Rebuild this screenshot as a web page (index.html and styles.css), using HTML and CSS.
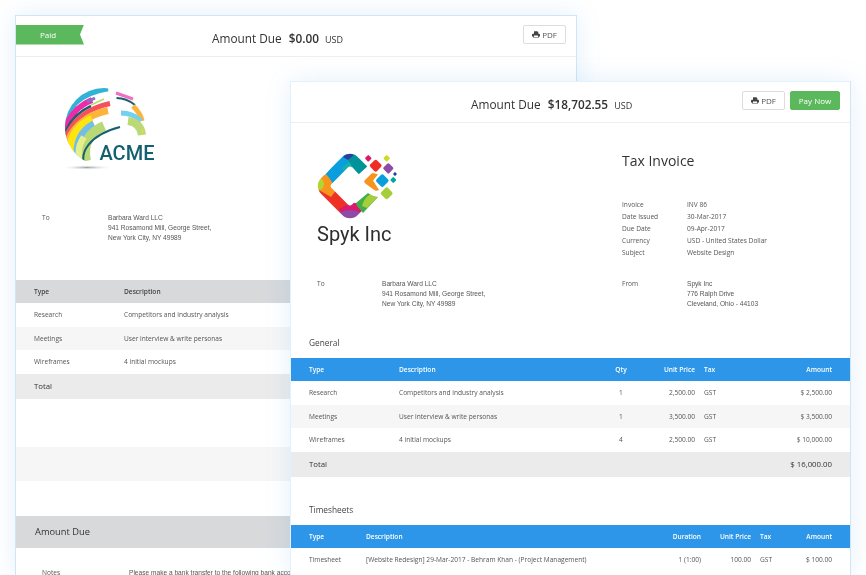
FILE: index.html
```html
<!DOCTYPE html>
<html lang="en">
<head>
    <meta charset="UTF-8">
    <meta name="viewport" content="width=device-width, initial-scale=1.0">
    <title>Invoices</title>
    <link rel="stylesheet" href="styles.css">
</head>
<body>
    <div class="invoice invoice-back">
        <div class="invoice-head">
            <div class="ribbon">Paid</div>
            <div class="due due-back">Amount Due <b>$0.00</b> <span>USD</span></div>
            <button class="btn btn-back"><svg class="printer" viewBox="0 0 12 10"><path d="M3 0h5l1.500 1.500V4H3z M1.500 4h9A1.500 1.500 0 0 1 12 5.500V8h-2v2H2V8H0V5.500A1.500 1.500 0 0 1 1.500 4z M3 6.500V9h6V6.500z" fill-rule="evenodd"/></svg> PDF</button>
        </div>
        <svg class="acme-logo" viewBox="0 0 120 100">
            <defs>
                <radialGradient id="acmeShadow">
                    <stop offset="0" stop-color="#9aa0a3"/>
                    <stop offset="1" stop-color="#fff" stop-opacity="0"/>
                </radialGradient>
                <clipPath id="globe">
                    <circle cx="54" cy="52" r="39"/>
                </clipPath>
            </defs>
            <ellipse cx="37" cy="92.500" rx="26" ry="2.500" fill="url(#acmeShadow)"/>
            <g fill="none" clip-path="url(#globe)">
                <path d="M12 58C14 30 32 17 58 13" stroke="#2fb4d8" stroke-width="6.500"/>
                <path d="M14 56C20 38 30 30 42 25" stroke="#ee2aa6" stroke-width="6"/>
                <path d="M37 27L45 23" stroke="#8d6cc8" stroke-width="3"/>
                <path d="M14 60C20 44 30 36 41 31" stroke="#16606f" stroke-width="2.500"/>
                <path d="M41 30L54 24" stroke="#b4dc6a" stroke-width="1.500"/>
                <path d="M14 68C20 46 38 33 60 28.500" stroke="#f5505c" stroke-width="5"/>
                <path d="M16 72C22 50 40 39 58 35.500" stroke="#fdb43c" stroke-width="7"/>
                <path d="M22 84C16 66 28 50 42 44" stroke="#fde60f" stroke-width="8"/>
                <path d="M28 86C24 68 32 55 44 49" stroke="#72bdea" stroke-width="7"/>
                <path d="M36 86C32 68 40 57 54 51" stroke="#b9d977" stroke-width="10"/>
                <path d="M34 92C27 84 27 72 34 62" stroke="#e4f08e" stroke-width="6.500"/>
                <path d="M35 91C29 78 39 60 70 52" stroke="#16606f" stroke-width="2"/>
            </g>
            <g fill="none">
                <path d="M66 18L83 24" stroke="#f06fc0" stroke-width="3"/>
                <path d="M66.500 23C74 23 80 26 85 30" stroke="#16606f" stroke-width="2"/>
                <path d="M83 31C87 35 91 40 92 46" stroke="#fdb43c" stroke-width="5"/>
                <path d="M71 38C79 38 86 41 91 46" stroke="#72d0f0" stroke-width="5"/>
                <path d="M78 46C86 47 91 52 92 60" stroke="#bcd977" stroke-width="8"/>
            </g>
            <path d="M93 54L93 61L92 56z" fill="#fde60f"/>
            <text class="acme-text" x="49.500" y="85">ACME</text>
        </svg>
        <div class="parties parties-back">
            <div class="party-label">To</div>
            <div class="address">Barbara Ward LLC<br>941 Rosamond Mill, George Street,<br>New York City, NY 49989</div>
        </div>
        <table class="items items-back">
            <colgroup><col class="back-type"><col></colgroup>
            <thead>
                <tr><th>Type</th><th>Description</th></tr>
            </thead>
            <tbody>
                <tr><td>Research</td><td>Competitors and industry analysis</td></tr>
                <tr><td>Meetings</td><td>User interview &amp; write personas</td></tr>
                <tr><td>Wireframes</td><td>4 initial mockups</td></tr>
                <tr class="total"><td>Total</td><td></td></tr>
            </tbody>
        </table>
        <div class="band-gap"></div>
        <div class="band-light"></div>
        <div class="band-gap"></div>
        <div class="due-bar">Amount Due</div>
        <div class="notes">
            <div class="party-label">Notes</div>
            <div class="address">Please make a bank transfer to the following bank account</div>
        </div>
    </div>

    <div class="invoice invoice-front">
        <div class="invoice-head invoice-head-front">
            <div class="due due-front">Amount Due <b>$18,702.55</b> <span>USD</span></div>
            <button class="btn"><svg class="printer" viewBox="0 0 12 10"><path d="M3 0h5l1.500 1.500V4H3z M1.500 4h9A1.500 1.500 0 0 1 12 5.500V8h-2v2H2V8H0V5.500A1.500 1.500 0 0 1 1.500 4z M3 6.500V9h6V6.500z" fill-rule="evenodd"/></svg> PDF</button>
            <button class="btn btn-pay">Pay Now</button>
        </div>
        <div class="top-row">
            <div class="brand">
                <svg class="spyk-logo" viewBox="0 0 90 74">
                    <defs>
                        <mask id="ring">
                            <rect x="7" y="13" width="52" height="52" rx="11" transform="rotate(45 33 39)" fill="#fff"/>
                            <rect x="18.500" y="24.500" width="29" height="29" rx="3" transform="rotate(45 33 39)" fill="#000"/>
                            <path d="M52 18L80 18V52L60 52L51 46L44 40L42 27z" fill="#000"/>
                        </mask>
                    </defs>
                    <g mask="url(#ring)">
                        <path d="M0 38L28 3H46L34 20L16 38L14 44z" fill="#0a9fdc"/>
                        <path d="M24 22L33 14L36 20L30 25z" fill="#14b1a8"/>
                        <path d="M31 13L36 7L54 18L42 28L36 21z" fill="#009499"/>
                        <path d="M26 10L31 5L37 8L31 13z" fill="#2b3f9e"/>
                        <path d="M3 34L16 38L36 60L34 74H28L0 55z" fill="#ee3124"/>
                        <path d="M0 28L10 28L20 42L14 50L0 42z" fill="#f7941d"/>
                        <ellipse cx="2" cy="37" rx="5" ry="6" fill="#b5d334"/>
                        <path d="M22 62L33 56H40L52 66L44 75H30z" fill="#d91a6e"/>
                        <ellipse cx="33" cy="69" rx="12" ry="6" fill="#8e4aa5"/>
                    </g>
                    <path d="M39 56L51 46Q56 50 61 50L46 66L40 59z" fill="#3fae49"/>
                    <path d="M45 59Q47 51 53 47.500Q57 50 61 50L50 61z" fill="#a6ce39"/>
                    <rect x="48.800" y="8.800" width="5" height="5" rx="1" transform="rotate(45 51.300 11.300)" fill="#d91a6e"/>
                    <rect x="54" y="14" width="9.400" height="9.400" rx="2" transform="rotate(45 58.700 18.700)" fill="#ee2e24"/>
                    <rect x="67.200" y="8.800" width="5" height="5" rx="1" transform="rotate(45 69.700 11.300)" fill="#cbdb2a"/>
                    <rect x="67.300" y="17.300" width="8" height="8" rx="1.500" transform="rotate(45 71.300 21.300)" fill="#8e4aa5"/>
                    <rect x="76.500" y="25.500" width="3" height="3" rx="0.500" transform="rotate(45 78 27)" fill="#2b3f9e"/>
                    <rect x="74" y="30.700" width="4.600" height="4.600" rx="1" transform="rotate(45 76.300 33)" fill="#00a79d"/>
                    <rect x="60.300" y="28.700" width="10" height="10" rx="2" transform="rotate(45 65.300 33.700)" fill="#0a9fdc"/>
                    <path d="M47.500 33.500L54 27Q56 25.500 58 26.500L61 27.500L56 33.500L62 43Q60 44 58 43.500L49 37Q46.500 35 47.500 33.500z" fill="#f7941d"/>
                    <rect x="65" y="41.600" width="9.400" height="9.400" rx="2" transform="rotate(45 69.700 46.300)" fill="#a6ce39"/>
                </svg>
                <div class="brand-name">Spyk Inc</div>
            </div>
            <div class="meta">
                <h1>Tax Invoice</h1>
                <dl class="meta-list">
                    <dt>Invoice</dt><dd>INV 86</dd>
                    <dt>Date Issued</dt><dd>30-Mar-2017</dd>
                    <dt>Due Date</dt><dd>09-Apr-2017</dd>
                    <dt>Currency</dt><dd>USD - United States Dollar</dd>
                    <dt>Subject</dt><dd>Website Design</dd>
                </dl>
            </div>
        </div>
        <div class="parties parties-front">
            <div class="party-label">To</div>
            <div class="address address-to">Barbara Ward LLC<br>941 Rosamond Mill, George Street,<br>New York City, NY 49989</div>
            <div class="party-label from-label">From</div>
            <div class="address">Spyk Inc<br>776 Ralph Drive<br>Cleveland, Ohio - 44103</div>
        </div>
        <h2>General</h2>
        <table class="items items-blue">
            <colgroup><col class="g-type"><col class="g-desc"><col class="g-qty"><col class="g-price"><col class="g-tax"><col></colgroup>
            <thead>
                <tr><th>Type</th><th>Description</th><th class="center">Qty</th><th class="right">Unit Price</th><th class="tax">Tax</th><th class="right">Amount</th></tr>
            </thead>
            <tbody>
                <tr><td>Research</td><td>Competitors and industry analysis</td><td class="center">1</td><td class="right">2,500.00</td><td class="tax">GST</td><td class="right">$ 2,500.00</td></tr>
                <tr><td>Meetings</td><td>User interview &amp; write personas</td><td class="center">1</td><td class="right">3,500.00</td><td class="tax">GST</td><td class="right">$ 3,500.00</td></tr>
                <tr><td>Wireframes</td><td>4 initial mockups</td><td class="center">4</td><td class="right">2,500.00</td><td class="tax">GST</td><td class="right">$ 10,000.00</td></tr>
                <tr class="total"><td>Total</td><td></td><td></td><td></td><td></td><td class="right">$ 16,000.00</td></tr>
            </tbody>
        </table>
        <h2 class="second">Timesheets</h2>
        <table class="items items-blue">
            <colgroup><col class="t-type"><col class="t-desc"><col class="t-dur"><col class="t-price"><col class="t-tax"><col></colgroup>
            <thead>
                <tr><th>Type</th><th>Description</th><th class="right">Duration</th><th class="right">Unit Price</th><th class="tax">Tax</th><th class="right">Amount</th></tr>
            </thead>
            <tbody>
                <tr><td>Timesheet</td><td>[Website Redesign] 29-Mar-2017 - Behram Khan - (Project Management)</td><td class="right">1 (1:00)</td><td class="right">100.00</td><td class="tax">GST</td><td class="right">$ 100.00</td></tr>
            </tbody>
        </table>
    </div>
</body>
</html>
```

FILE: styles.css
```css
body {
    font-family: "Open Sans", sans-serif;
    margin: 0;
    padding: 0;
    width: 866px;
    height: 575px;
    position: relative;
    overflow: hidden;
    background-color: #fff;
    color: #555;
}

.invoice {
    position: absolute;
    bottom: 0;
    overflow: hidden;
    background-color: #fff;
    border: 1px solid #cfe6f9;
    border-bottom: none;
    box-shadow: 0 0 24px rgba(45, 150, 232, 0.13);
    will-change: transform;
}

.invoice-back {
    left: 15px;
    top: 15px;
    width: 560px;
}

.invoice-front {
    left: 290px;
    top: 81px;
    width: 559px;
    border-top-color: #e3f1fc;
    border-left-color: #e3f1fc;
}

/* header bar */
.invoice-head {
    display: flex;
    align-items: center;
    height: 40px;
    border-bottom: 1px solid #eee;
}

.invoice-head-front {
    padding-right: 10px;
}

.ribbon {
    width: 68px;
    height: 20px;
    margin-top: -3px;
    padding-right: 4px;
    box-sizing: border-box;
    background-color: #5cb85c;
    clip-path: polygon(0 0, 100% 0, calc(100% - 4px) 50%, 100% 100%, 0 100%);
    color: #fff;
    font-size: 8px;
    line-height: 19px;
    text-align: center;
}

.due {
    color: #333;
    font-size: 11.800px;
    white-space: nowrap;
    margin-top: 4px;
    margin-right: auto;
}

.due b {
    font-weight: 600;
    margin-left: 4px;
}

.due span {
    font-size: 9px;
    margin-left: 3px;
}

.due-back {
    margin-left: 128px;
}

.due-front {
    margin-left: 180px;
}

.btn {
    font-family: "Open Sans", sans-serif;
    font-size: 8px;
    color: #555;
    height: 19px;
    width: 43px;
    padding: 0;
    margin-top: -3px;
    background-color: #fff;
    border: 1px solid #ddd;
    border-radius: 2px;
}

.btn-back {
    margin-right: 10px;
}

.btn-pay {
    width: 50px;
    margin-left: 5px;
    background-color: #5cb85c;
    border-color: #5cb85c;
    color: #fff;
}

.printer {
    width: 8px;
    height: 7px;
    fill: #444;
}

/* logos */
.acme-logo {
    display: block;
    width: 120px;
    height: 100px;
    margin: 18px 0 0 34px;
}

.acme-text {
    font-family: Roboto, sans-serif;
    font-size: 20px;
    font-weight: 500;
    fill: #14606f;
}

.top-row {
    display: flex;
    height: 156px;
}

.brand {
    width: 331px;
    padding: 24px 0 0 26px;
    box-sizing: border-box;
}

.spyk-logo {
    display: block;
    width: 90px;
    height: 74px;
}

.brand-name {
    font-family: Roboto, sans-serif;
    font-size: 20px;
    color: #2e2e2e;
    line-height: 24px;
    margin-top: 1px;
}

.meta h1 {
    font-size: 14px;
    font-weight: 400;
    color: #333;
    margin: 27px 0 0;
    line-height: 22px;
}

.meta-list {
    display: grid;
    grid-template-columns: 65px auto;
    margin: 27px 0 0;
    font-size: 6.600px;
    line-height: 12px;
    color: #555;
}

.meta-list dd {
    margin: 0;
}

/* To / From */
.parties {
    display: flex;
    font-size: 6.600px;
    line-height: 10px;
}

.parties-back {
    margin: 38px 0 0 26px;
    height: 67px;
}

.parties-front {
    margin: 0 0 0 26px;
    height: 57px;
}

.party-label {
    width: 66px;
}

.parties-front .party-label {
    width: 65px;
}

.address {
    font-family: "Liberation Sans", sans-serif;
    line-height: 10px;
}

.address-to {
    width: 240px;
}

h2 {
    font-size: 8.300px;
    font-weight: 400;
    color: #444;
    line-height: 14px;
    margin: 0 0 8px 18px;
}

h2.second {
    margin-top: 26px;
}

/* tables */
.items {
    width: 100%;
    table-layout: fixed;
    border-collapse: collapse;
    font-size: 6.600px;
}

.items th,
.items td {
    padding: 0;
    text-align: left;
    font-weight: 400;
    white-space: nowrap;
    overflow: hidden;
}

.items th {
    height: 23px;
    font-weight: 600;
}

.items td {
    height: 23.500px;
}

.items th:first-child,
.items td:first-child {
    padding-left: 18px;
}

.items tbody tr:nth-child(2) {
    background-color: #f6f6f6;
}

.items tr.total {
    background-color: #ebebeb;
    font-size: 7.800px;
    color: #333;
}

.items tr.total td {
    height: 25px;
}

.items-back thead tr {
    background-color: #d7d9db;
    color: #444;
}

.items-blue thead tr {
    background-color: #2d96e8;
    color: #fff;
}

.items .right {
    text-align: right;
    padding-right: 4px;
}

.items .right:last-child {
    padding-right: 18px;
}

.items .center {
    text-align: center;
}

.items .tax {
    padding-left: 5px;
}

.back-type { width: 108px; }

.g-type { width: 108px; }
.g-desc { width: 202px; }
.g-qty { width: 40px; }
.g-price { width: 58px; }
.g-tax { width: 50px; }

.t-type { width: 75px; }
.t-desc { width: 280px; }
.t-dur { width: 59px; }
.t-price { width: 50px; }
.t-tax { width: 45px; }

/* rest of the back invoice */
.band-gap {
    height: 48px;
}

.band-light {
    height: 34px;
    background-color: #f6f6f6;
}

.band-light + .band-gap {
    height: 35px;
}

.due-bar {
    height: 32px;
    padding-left: 19px;
    background-color: #d7d9db;
    color: #333;
    font-size: 9.300px;
    line-height: 32px;
}

.notes {
    display: flex;
    margin: 20px 0 0 26px;
    font-size: 6.600px;
    line-height: 10px;
}

.notes .party-label {
    width: 87px;
}
```
